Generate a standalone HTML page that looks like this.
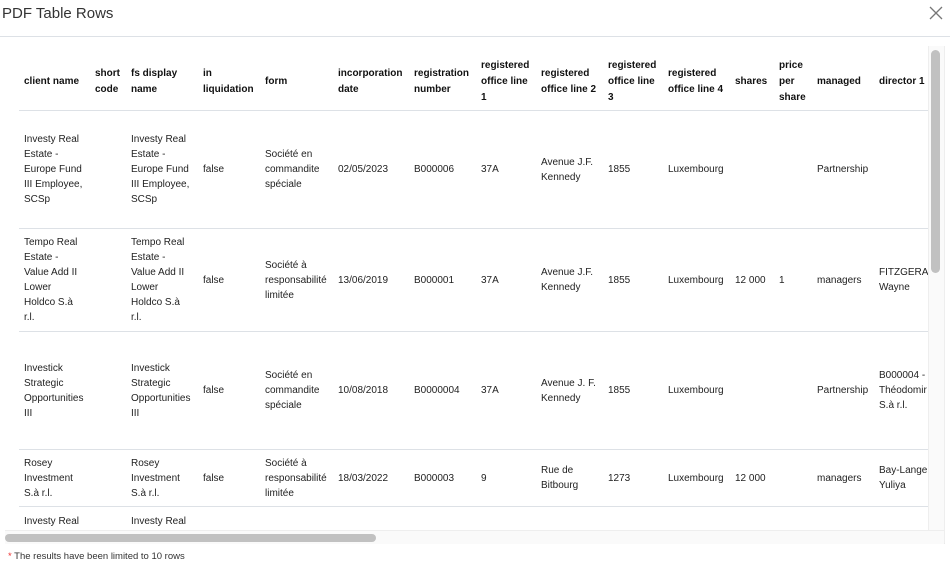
<!DOCTYPE html>
<html><head><meta charset="utf-8"><style>
*{box-sizing:border-box;margin:0;padding:0}
body{width:950px;height:569px;background:#fff;font-family:"Liberation Sans",Arial,sans-serif;color:#222;position:relative;overflow:hidden}
.title{position:absolute;left:2px;top:5px;font-size:15px;color:#333}
.x{position:absolute;left:929px;top:6px;width:14px;height:14px}
.hr{position:absolute;left:0;top:36px;width:950px;height:1px;background:#dde1e6}
.box{position:absolute;left:5px;top:46px;width:940px;height:498px;border-bottom:1px solid #e4e4e4;border-right:1px solid #eee}
.clip{position:absolute;left:0;top:0;width:923px;height:484px;overflow:hidden}
.tbl{position:absolute;left:14px;top:0;width:1000px}
.r{display:flex;align-items:center;border-bottom:1px solid #dde1e6;font-size:10px;line-height:15px}
.h{font-weight:bold;font-size:10px;line-height:16px;height:65px;padding-top:8px;color:#111}
.r>div{padding-left:5px;padding-right:6px;flex:none}
.c1{width:71px}.c2{width:36px}.c3{width:72px}.c4{width:62px}.c5{width:73px}.c6{width:76px}.c7{width:67px}.c8{width:60px}.c9{width:67px}.c10{width:60px}.c11{width:67px}.c12{width:44px}.c13{width:38px}.c14{width:62px}.c15{width:60px;white-space:nowrap;overflow:hidden}
.r>.c4,.r>.c5,.r>.c6,.r>.c7,.r>.c8,.r>.c9,.r>.c10,.r>.c11,.r>.c12,.r>.c13,.r>.c14{padding-right:3px}
.vs{position:absolute;left:923px;top:0;width:16px;height:484px;background:#fafafa;border-left:1px solid #eee}
.vt{position:absolute;left:2px;top:4px;width:9px;height:223px;background:#c1c1c1;border-radius:5px}
.hs{position:absolute;left:0;top:484px;width:939px;height:14px;background:#fafafa;border-top:1px solid #eee}
.ht{position:absolute;left:0px;top:3px;width:371px;height:8px;background:#c1c1c1;border-radius:4px}
.note{position:absolute;left:8px;top:551px;font-size:9.5px;color:#333}
.note span{color:#e33}
</style></head><body>
<div class="title">PDF Table Rows</div>
<svg class="x" viewBox="0 0 14 14"><path d="M1 1L13 13M13 1L1 13" stroke="#777" stroke-width="1.3"/></svg>
<div class="hr"></div>
<div class="box"><div class="clip"><div class="tbl">
<div class="r h"><div class="c1">client name</div><div class="c2">short code</div><div class="c3">fs display name</div><div class="c4">in liquidation</div><div class="c5">form</div><div class="c6">incorporation date</div><div class="c7">registration number</div><div class="c8">registered office line 1</div><div class="c9">registered office line 2</div><div class="c10">registered office line 3</div><div class="c11">registered office line 4</div><div class="c12">shares</div><div class="c13">price per share</div><div class="c14">managed</div><div class="c15">director 1</div></div>
<div class="r" style="height:118px"><div class="c1">Investy Real Estate - Europe Fund III Employee, SCSp</div><div class="c2"></div><div class="c3">Investy Real Estate - Europe Fund III Employee, SCSp</div><div class="c4">false</div><div class="c5">Société en commandite spéciale</div><div class="c6">02/05/2023</div><div class="c7">B000006</div><div class="c8">37A</div><div class="c9">Avenue J.F. Kennedy</div><div class="c10">1855</div><div class="c11">Luxembourg</div><div class="c12"></div><div class="c13"></div><div class="c14">Partnership</div><div class="c15"></div></div>
<div class="r" style="height:103px"><div class="c1">Tempo Real Estate - Value Add II Lower Holdco S.à r.l.</div><div class="c2"></div><div class="c3">Tempo Real Estate - Value Add II Lower Holdco S.à r.l.</div><div class="c4">false</div><div class="c5">Société à responsabilité limitée</div><div class="c6">13/06/2019</div><div class="c7">B000001</div><div class="c8">37A</div><div class="c9">Avenue J.F. Kennedy</div><div class="c10">1855</div><div class="c11">Luxembourg</div><div class="c12">12 000</div><div class="c13">1</div><div class="c14">managers</div><div class="c15">FITZGERALD<br>Wayne</div></div>
<div class="r" style="height:118px"><div class="c1">Investick Strategic Opportunities III</div><div class="c2"></div><div class="c3">Investick Strategic Opportunities III</div><div class="c4">false</div><div class="c5">Société en commandite spéciale</div><div class="c6">10/08/2018</div><div class="c7">B0000004</div><div class="c8">37A</div><div class="c9">Avenue J. F. Kennedy</div><div class="c10">1855</div><div class="c11">Luxembourg</div><div class="c12"></div><div class="c13"></div><div class="c14">Partnership</div><div class="c15">B000004 -<br>Théodomir<br>S.à r.l.</div></div>
<div class="r" style="height:57px"><div class="c1">Rosey Investment S.à r.l.</div><div class="c2"></div><div class="c3">Rosey Investment S.à r.l.</div><div class="c4">false</div><div class="c5">Société à responsabilité limitée</div><div class="c6">18/03/2022</div><div class="c7">B000003</div><div class="c8">9</div><div class="c9">Rue de Bitbourg</div><div class="c10">1273</div><div class="c11">Luxembourg</div><div class="c12">12 000</div><div class="c13"></div><div class="c14">managers</div><div class="c15">Bay-Lange<br>Yuliya</div></div>
<div class="r" style="height:60px;align-items:flex-start;padding-top:7px"><div class="c1">Investy Real</div><div class="c2"></div><div class="c3">Investy Real</div></div>
</div></div>
<div class="vs"><div class="vt"></div></div>
<div class="hs"><div class="ht"></div></div>
</div>
<div class="note"><span>*</span> The results have been limited to 10 rows</div>
</body></html>
